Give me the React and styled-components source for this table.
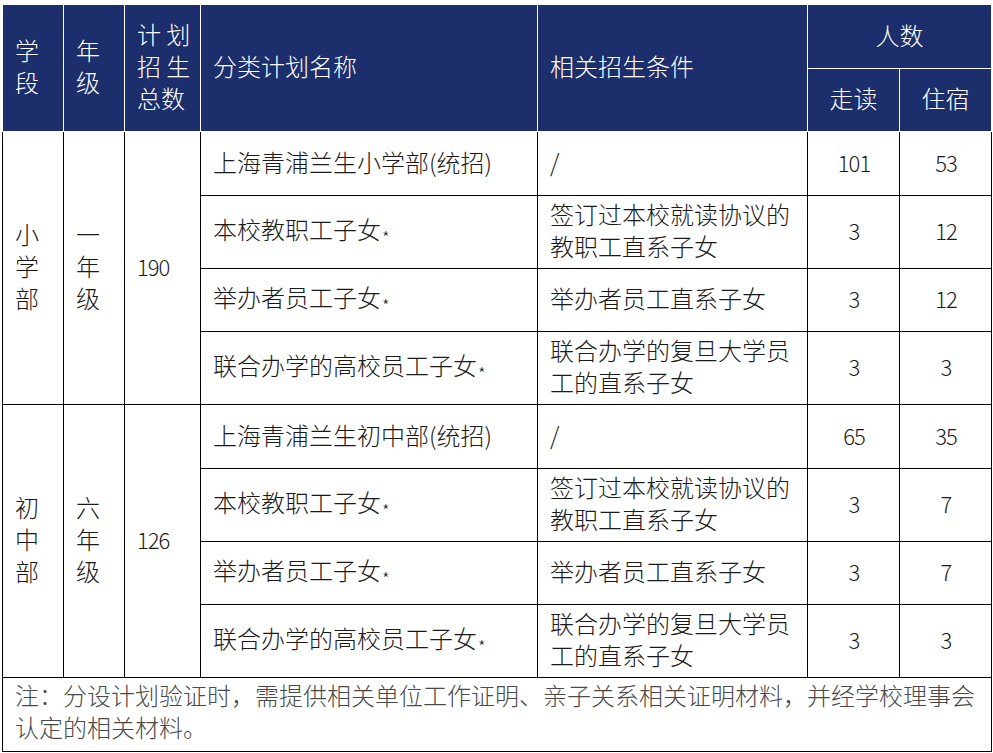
import React from 'react';
import styled, { createGlobalStyle } from 'styled-components';

const GlobalStyle = createGlobalStyle`
  body {
    margin: 0;
    background: #fff;
    font-family: "Noto Sans CJK SC", "Liberation Sans", sans-serif;
  }
`;

const Page = styled.div`
  padding: 4px 0 0 2px;
`;

const Table = styled.table`
  width: 989px;
  table-layout: fixed;
  border-collapse: collapse;
  font-size: 24px;
  font-weight: 300;
  line-height: 32px;
  color: #1a1a1a;
`;

// $h is the row height in the picture; the cell's height is content height
// (padding and the 1px border are added by the browser)
const HeadCell = styled.th`
  background: #1c2f6c;
  color: #fff;
  font-weight: 300;
  border: 1px solid #fff;
  padding: 0 12px 4px;
  height: ${(p) => (p.$h || 63) - 5}px;
  text-align: ${(p) => p.$align || 'left'};
  vertical-align: middle;
  white-space: nowrap;
`;

const Cell = styled.td`
  border: 1px solid #000;
  padding: 0 11px 4px 12px;
  height: ${(p) => (p.$h || 63) - 5}px;
  text-align: ${(p) => p.$align || 'left'};
  vertical-align: middle;
  white-space: nowrap;
`;

const Num = styled.span`
  font-size: 22px;
  letter-spacing: -1px;
`;

const Star = styled.span`
  display: inline-block;
  font-size: 17px;
  margin-left: 1px;
  transform: translateY(5px);
`;

const Note = styled.td`
  border: 1px solid #000;
  padding: 1px 12px 4px;
  height: 68px;
  color: #4a4a4a;
  line-height: 32px;
  vertical-align: top;
  white-space: nowrap;
`;

const groups = [
  {
    stage: ['小', '学', '部'],
    grade: ['一', '年', '级'],
    total: '190',
    school: '上海青浦兰生小学部(统招)',
    nums: [['101', '53'], ['3', '12'], ['3', '12'], ['3', '3']],
  },
  {
    stage: ['初', '中', '部'],
    grade: ['六', '年', '级'],
    total: '126',
    school: '上海青浦兰生初中部(统招)',
    nums: [['65', '35'], ['3', '7'], ['3', '7'], ['3', '3']],
  },
];

const lines = (arr) =>
  arr.map((t, i) => (
    <React.Fragment key={i}>
      {i > 0 && <br />}
      {t}
    </React.Fragment>
  ));

function Group({ g }) {
  const rows = [
    { name: g.school, cond: ['/'], h: 64 },
    { name: '本校教职工子女', star: true, cond: ['签订过本校就读协议的', '教职工直系子女'], h: 73 },
    { name: '举办者员工子女', star: true, cond: ['举办者员工直系子女'], h: 63 },
    { name: '联合办学的高校员工子女', star: true, cond: ['联合办学的复旦大学员', '工的直系子女'], h: 73 },
  ];
  return rows.map((r, i) => (
    <tr key={i}>
      {i === 0 && (
        <>
          <Cell rowSpan={4}>{lines(g.stage)}</Cell>
          <Cell rowSpan={4}>{lines(g.grade)}</Cell>
          <Cell rowSpan={4}>
            <Num>{g.total}</Num>
          </Cell>
        </>
      )}
      <Cell $h={r.h}>
        {r.name}
        {r.star && <Star>*</Star>}
      </Cell>
      <Cell $h={r.h}>{lines(r.cond)}</Cell>
      <Cell $h={r.h} $align="center">
        <Num>{g.nums[i][0]}</Num>
      </Cell>
      <Cell $h={r.h} $align="center">
        <Num>{g.nums[i][1]}</Num>
      </Cell>
    </tr>
  ));
}

export default function App() {
  return (
    <Page>
      <GlobalStyle />
      <Table>
        <colgroup>
          <col style={{ width: 61 }} />
          <col style={{ width: 61 }} />
          <col style={{ width: 76 }} />
          <col style={{ width: 337 }} />
          <col style={{ width: 270 }} />
          <col style={{ width: 92 }} />
          <col style={{ width: 92 }} />
        </colgroup>
        <thead>
          <tr>
            <HeadCell rowSpan={2}>{lines(['学', '段'])}</HeadCell>
            <HeadCell rowSpan={2}>{lines(['年', '级'])}</HeadCell>
            <HeadCell rowSpan={2}>{lines(['计 划', '招 生', '总数'])}</HeadCell>
            <HeadCell rowSpan={2}>分类计划名称</HeadCell>
            <HeadCell rowSpan={2}>相关招生条件</HeadCell>
            <HeadCell colSpan={2} $align="center" $h={64}>
              人数
            </HeadCell>
          </tr>
          <tr>
            <HeadCell $align="center">走读</HeadCell>
            <HeadCell $align="center">住宿</HeadCell>
          </tr>
        </thead>
        <tbody>
          {groups.map((g, i) => (
            <Group key={i} g={g} />
          ))}
          <tr>
            <Note colSpan={7}>
              注：分设计划验证时，需提供相关单位工作证明、亲子关系相关证明材料，并经学校理事会
              <br />
              认定的相关材料。
            </Note>
          </tr>
        </tbody>
      </Table>
    </Page>
  );
}
